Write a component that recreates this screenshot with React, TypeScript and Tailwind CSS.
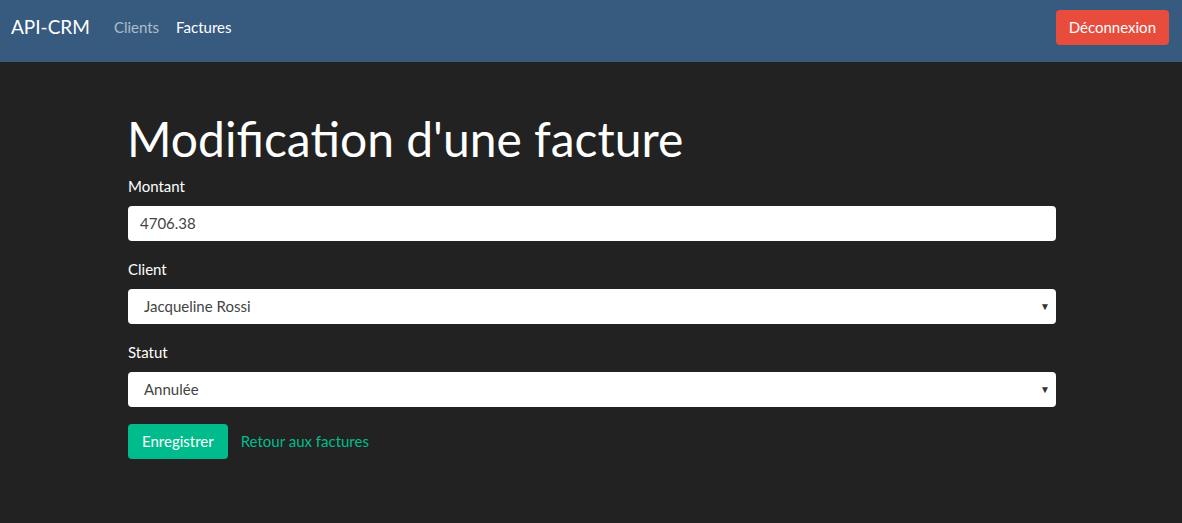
const font = "font-['Lato','Open_Sans',sans-serif]";

function Field({ label, children }: { label: string; children: React.ReactNode }) {
  return (
    <div className="mb-4">
      <label className="mb-2 block h-6 text-[15px] leading-6 text-white">{label}</label>
      {children}
    </div>
  );
}

function FakeSelect({ value }: { value: string }) {
  return (
    <div className="flex h-[35px] items-center justify-between rounded bg-white pl-4 pr-[6px] text-[15px] text-[#444]">
      <span>{value}</span>
      <span className="text-[10px] text-[#333]">▼</span>
    </div>
  );
}

export default function App() {
  return (
    <div className={`min-h-[523px] bg-[#222222] ${font}`}>
      <nav className="flex h-[62px] items-center justify-between bg-[#375a7f] pb-2 pl-[11px] pr-[13px]">
        <div className="flex items-center">
          <a className="mr-[24px] text-[19px] text-white">API-CRM</a>
          <a className="mr-[17px] text-[15px] text-white/60">Clients</a>
          <a className="text-[15px] text-white">Factures</a>
        </div>
        <button className="h-[35px] rounded bg-[#e74c3c] px-[13px] text-[15px] text-white">
          Déconnexion
        </button>
      </nav>

      <main className="mx-auto w-[930px] pl-[2px] pt-[48px]">
        <h1 className="mb-[6px] -ml-px text-5xl leading-[57.6px] text-white">Modification d'une facture</h1>
        <Field label="Montant">
          <div className="flex h-[35px] items-center rounded bg-white px-3 text-[15px] text-[#444]">
            4706.38
          </div>
        </Field>
        <Field label="Client">
          <FakeSelect value="Jacqueline Rossi" />
        </Field>
        <Field label="Statut">
          <FakeSelect value="Annulée" />
        </Field>
        <div className="flex items-center gap-[13px] pt-[1px]">
          <button className="h-[35px] rounded bg-[#00bc8c] px-[14px] text-[15px] text-white">
            Enregistrer
          </button>
          <a className="text-[15px] text-[#00bc8c]">Retour aux factures</a>
        </div>
      </main>
    </div>
  );
}
